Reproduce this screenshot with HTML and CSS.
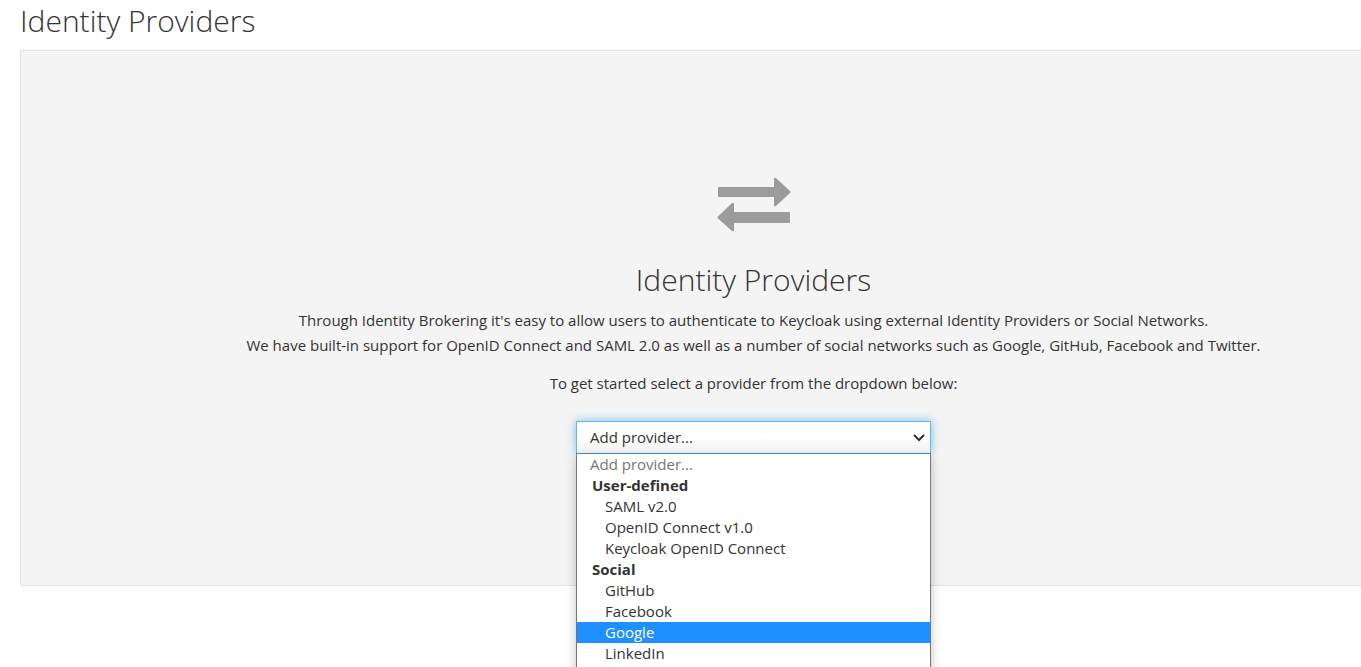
FILE: index.html
```html
<!DOCTYPE html>
<html lang="en">
<head>
<meta charset="utf-8">
<title>Identity Providers</title>
<link rel="stylesheet" href="styles.css">
</head>
<body>
<main class="page">
  <h1 class="heading page-title">Identity Providers</h1>
  <section class="blank-slate">
    <svg class="slate-icon" viewBox="0 0 74 56" aria-hidden="true">
      <path d="M2 10H57V2Q57 0 59 1L73 14Q74 15 73 16L59 29Q57 30 57 28V20H2Q1 20 1 19V11Q1 10 2 10Z"/>
      <path d="M72 35H17V27Q17 25 15 26L1 39.500Q0 40.500 1 41.500L15 54Q17 55 17 53V46H72Q73 46 73 45V36Q73 35 72 35Z"/>
    </svg>
    <h2 class="heading slate-title">Identity Providers</h2>
    <p class="text">Through Identity Brokering it's easy to allow users to authenticate to Keycloak using external Identity Providers or Social Networks.<br>We have built-in support for OpenID Connect and SAML 2.0 as well as a number of social networks such as Google, GitHub, Facebook and Twitter.</p>
    <p class="text"><label for="provider">To get started select a provider from the dropdown below:</label></p>
    <div class="picker">
      <select class="picker-select" id="provider">
        <option>Add provider...</option>
      </select>
      <svg class="picker-arrow" viewBox="0 0 12 8" aria-hidden="true"><path d="M1 1L6 6L11 1"/></svg>
      <div class="menu" role="listbox" aria-label="Providers">
        <div class="menu-row placeholder" role="option">Add provider...</div>
        <div class="menu-row group">User-defined</div>
        <div class="menu-row item" role="option">SAML v2.0</div>
        <div class="menu-row item" role="option">OpenID Connect v1.0</div>
        <div class="menu-row item" role="option">Keycloak OpenID Connect</div>
        <div class="menu-row group">Social</div>
        <div class="menu-row item" role="option">GitHub</div>
        <div class="menu-row item" role="option">Facebook</div>
        <div class="menu-row item active" role="option" aria-selected="true">Google</div>
        <div class="menu-row item" role="option">LinkedIn</div>
      </div>
    </div>
  </section>
</main>
</body>
</html>
```
FILE: styles.css
```css
* { box-sizing: border-box; }
body {
  min-height: 100vh;
  margin: 0;
  overflow: hidden;
  background: #fff;
  color: #333;
  font: 15px/25px "Open Sans", sans-serif;
}
.page { padding-left: 20px; }
.heading {
  margin: 0;
  font-size: 30px;
  font-weight: 300;
  line-height: 34px;
}
.page-title { padding: 4px 0 12px; }
.blank-slate {
  display: flex;
  flex-direction: column;
  align-items: center;
  padding: 126px 0 131px 125px;
  border: 1px solid #e2e2e2;
  border-right: 0;
  background: #f4f4f4;
  text-align: center;
}
.slate-icon {
  width: 74px;
  height: 56px;
  margin-bottom: 30px;
  fill: #9c9c9c;
}
.slate-title { margin-bottom: 11px; }
.text { margin: 0 0 13px; }
.picker {
  position: relative;
  width: 355px;
  margin-top: 12px;
}
.picker-select {
  display: block;
  width: 100%;
  height: 33px;
  padding: 0 30px 0 13px;
  border: 1px solid #66b5ee;
  border-radius: 0;
  outline: 0;
  appearance: none;
  background: linear-gradient(#fff 50%, #f0f0f0);
  box-shadow: 0 0 9px rgba(90, 175, 233, 0.8);
  color: #333;
  font: inherit;
}
.picker-arrow {
  position: absolute;
  top: 13px;
  right: 6px;
  width: 12px;
  height: 8px;
  fill: none;
  stroke: #333;
  stroke-width: 2;
  pointer-events: none;
}
.menu {
  position: absolute;
  top: 100%;
  left: 0;
  width: 100%;
  margin-top: -1px;
  padding-bottom: 8px;
  border: 1px solid #767676;
  border-top-color: #4488b8;
  background: #fff;
  box-shadow: 0 6px 10px rgba(0, 0, 0, 0.25);
  text-align: left;
}
.menu-row {
  padding-left: 13px;
  line-height: 21px;
}
.placeholder { color: #767676; }
.group {
  padding-left: 15px;
  font-weight: 700;
}
.item { padding-left: 28px; }
.active {
  background: #1e90ff;
  color: #fff;
}
```
